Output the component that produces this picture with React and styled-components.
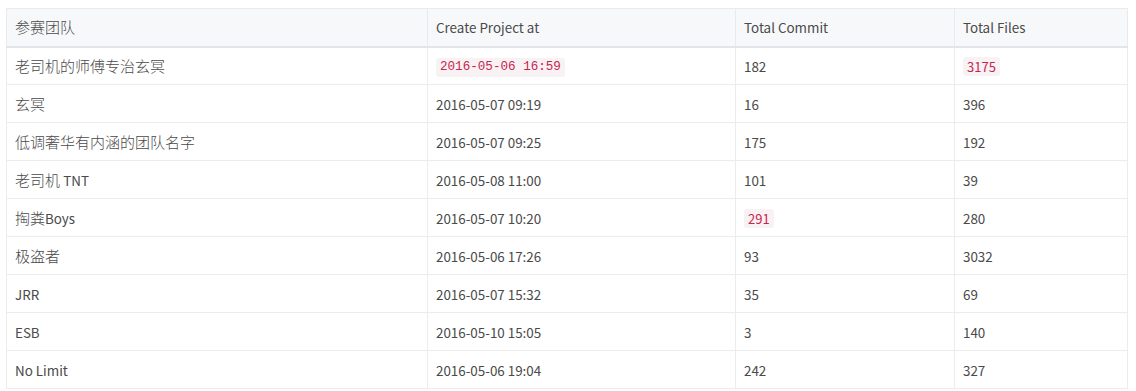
import React from "react";
import styled, { createGlobalStyle } from "styled-components";

const Global = createGlobalStyle`
  html, body { margin: 0; padding: 0; background: #fff; }
  body {
    font-family: "Noto Sans CJK SC", "Source Sans Pro", Lato, sans-serif;
    font-size: 13.4px;
    color: #4a4a4a;
  }
`;

const Page = styled.div`
  padding: 8px 9px 0 6px;
`;

const Table = styled.table`
  width: 1121px;
  border-collapse: collapse;
  border-spacing: 0;
  table-layout: fixed;
`;

const Th = styled.th`
  width: ${(p) => p.$w}px;
  height: 38px;
  padding: 0 8px;
  text-align: left;
  font-weight: ${(p) => (p.$cjk ? 300 : 400)};
  font-size: ${(p) => (p.$cjk ? "15px" : "13.4px")};
  background: #f7f8fa;
  border: 1px solid #e8eaed;
  border-bottom: 2px solid #e1e4e8;
  box-sizing: border-box;
  line-height: 20px;
`;

const Td = styled.td`
  height: 38px;
  padding: 0 8px;
  font-size: ${(p) => (p.$cjk ? "15px" : "13.4px")};
  font-weight: ${(p) => (p.$cjk ? 300 : 400)};
  border: 1px solid #ececec;
  box-sizing: border-box;
  line-height: 20px;
  white-space: nowrap;
`;

const Latin = styled.span`
  font-size: 13.4px;
  font-weight: 400;
`;

const Code = styled.code`
  display: inline-block;
  padding: 0 4px;
  line-height: 19px;
  font-size: ${(p) => (p.$mono ? "12.6px" : "13px")};
  color: #c7254e;
  background: #f9f2f4;
  border-radius: 3px;
  font-family: ${(p) => (p.$mono ? '"Liberation Mono", monospace' : 'inherit')};
`;

const cols = [
  { label: "参赛团队", w: 421 },
  { label: "Create Project at", w: 308 },
  { label: "Total Commit", w: 219 },
  { label: "Total Files", w: 173 },
];

const rows = [
  ["老司机的师傅专治玄冥", { code: "2016-05-06 16:59", mono: true }, "182", { code: "3175" }],
  ["玄冥", "2016-05-07 09:19", "16", "396"],
  ["低调奢华有内涵的团队名字", "2016-05-07 09:25", "175", "192"],
  ["老司机 TNT", "2016-05-08 11:00", "101", "39"],
  ["掏粪Boys", "2016-05-07 10:20", { code: "291" }, "280"],
  ["极盗者", "2016-05-06 17:26", "93", "3032"],
  ["JRR", "2016-05-07 15:32", "35", "69"],
  ["ESB", "2016-05-10 15:05", "3", "140"],
  ["No Limit", "2016-05-06 19:04", "242", "327"],
];

const Mixed = ({ text }) =>
  text
    .split(/([A-Za-z0-9][A-Za-z0-9 ]*)/)
    .filter(Boolean)
    .map((part, i) =>
      /[A-Za-z0-9]/.test(part) ? <Latin key={i}>{part}</Latin> : <React.Fragment key={i}>{part}</React.Fragment>
    );

const Cell = ({ v, mixed }) =>
  typeof v === "string" ? (
    mixed ? <Mixed text={v} /> : v
  ) : (
    <Code $mono={v.mono}>{v.code}</Code>
  );

export default function App() {
  return (
    <Page>
      <Global />
      <Table>
        <thead>
          <tr>
            {cols.map((c, j) => (
              <Th key={c.label} $w={c.w} $cjk={j === 0}>{c.label}</Th>
            ))}
          </tr>
        </thead>
        <tbody>
          {rows.map((r, i) => (
            <tr key={i}>
              {r.map((v, j) => (
                <Td key={j} $cjk={j === 0}>
                  <Cell v={v} mixed={j === 0} />
                </Td>
              ))}
            </tr>
          ))}
        </tbody>
      </Table>
    </Page>
  );
}
